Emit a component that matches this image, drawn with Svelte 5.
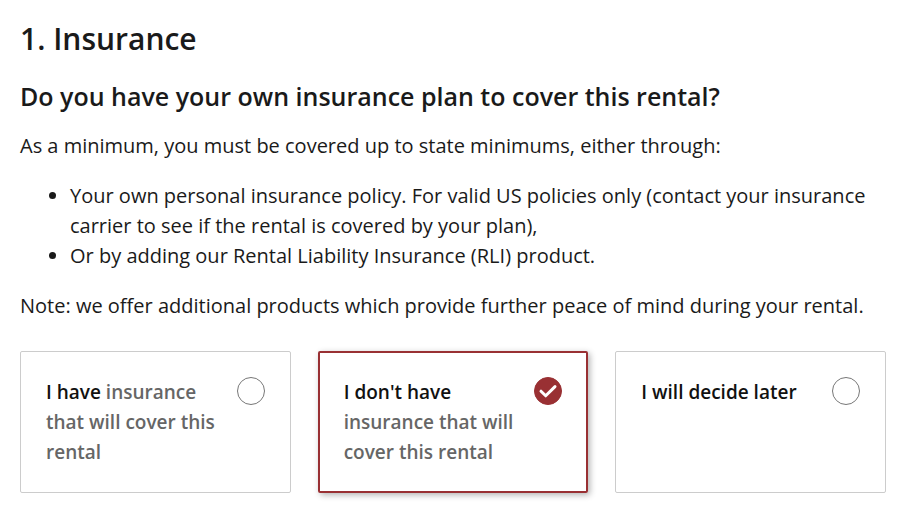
<script>
const options = [
    { value: 'have', strong: 'I have', rest: 'insurance that will cover this rental' },
    { value: 'none', strong: "I don't have", rest: 'insurance that will cover this rental' },
    { value: 'later', strong: 'I will decide later', rest: '' }
];

let selected = 'none';
</script>

<section class="insurance">
    <h1>1. Insurance</h1>
    <h2 id="insurance-question">Do you have your own insurance plan to cover this rental?</h2>
    <p>As a minimum, you must be covered up to state minimums, either through:</p>
    <ul>
        <li>Your own personal insurance policy. For valid US policies only (contact your insurance carrier to see if the rental is covered by your plan),</li>
        <li>Or by adding our Rental Liability Insurance (RLI) product.</li>
    </ul>
    <p>Note: we offer additional products which provide further peace of mind during your rental.</p>

    <div class="options" role="radiogroup" aria-labelledby="insurance-question">
        {#each options as option}
        <label class="option" class:selected={selected === option.value} for="insurance-{option.value}">
            <span class="option-text"><strong>{option.strong}</strong> {option.rest}</span>
            <span class="option-control">
                <input
                    type="radio"
                    name="insurance"
                    id="insurance-{option.value}"
                    value={option.value}
                    bind:group={selected}
                />
                {#if selected === option.value}
                <svg class="check" viewBox="0 0 28 28" width="28" height="28" aria-hidden="true"><path d="m7 14.2 4.7 4.6 9.3-9.2" /></svg>
                {/if}
            </span>
        </label>
        {/each}
    </div>
</section>

<style>
    :global(body) {
        margin: 0;
        background: #fff;
        color: #1a1a1a;
        font-family: "Open Sans", "Noto Sans", sans-serif;
        font-size: 20px;
        line-height: 30px;
    }

    .insurance {
        padding: 20px;
    }

    h1, h2, p, ul {
        margin: 0 0 20px;
    }

    h1 {
        font-size: 30px;
        font-weight: 600;
        line-height: 38px;
    }

    h2 {
        font-size: 25px;
        font-weight: 600;
        line-height: 37px;
        margin-bottom: 16px;
    }

    ul {
        padding-left: 50px;
    }

    .options {
        display: grid;
        grid-template-columns: repeat(3, 1fr);
        gap: 27px;
        margin-top: 30px;
    }

    .option {
        display: flex;
        justify-content: space-between;
        gap: 16px;
        box-sizing: border-box;
        padding: 25px;
        border: 1px solid #ccc;
        border-radius: 2px;
        color: #666;
        font-size: 19px;
        font-weight: 600;
        cursor: pointer;
    }

    .option.selected {
        padding: 24px;
        border: 2px solid #993033;
        box-shadow: 2px 2px 6px rgba(0, 0, 0, 0.3);
    }

    .option strong {
        color: #111;
        font-weight: 600;
    }

    .option-control {
        position: relative;
        flex: none;
        width: 28px;
        height: 28px;
    }

    input {
        appearance: none;
        box-sizing: border-box;
        display: block;
        width: 28px;
        height: 28px;
        margin: 0;
        border: 1px solid #777;
        border-radius: 50%;
        background: #fff;
        cursor: pointer;
    }

    input:checked {
        border-color: #993033;
        background: #993033;
    }

    .check {
        position: absolute;
        inset: 0;
        fill: none;
        stroke: #fff;
        stroke-width: 3;
        stroke-linecap: round;
        stroke-linejoin: round;
        pointer-events: none;
    }
</style>
